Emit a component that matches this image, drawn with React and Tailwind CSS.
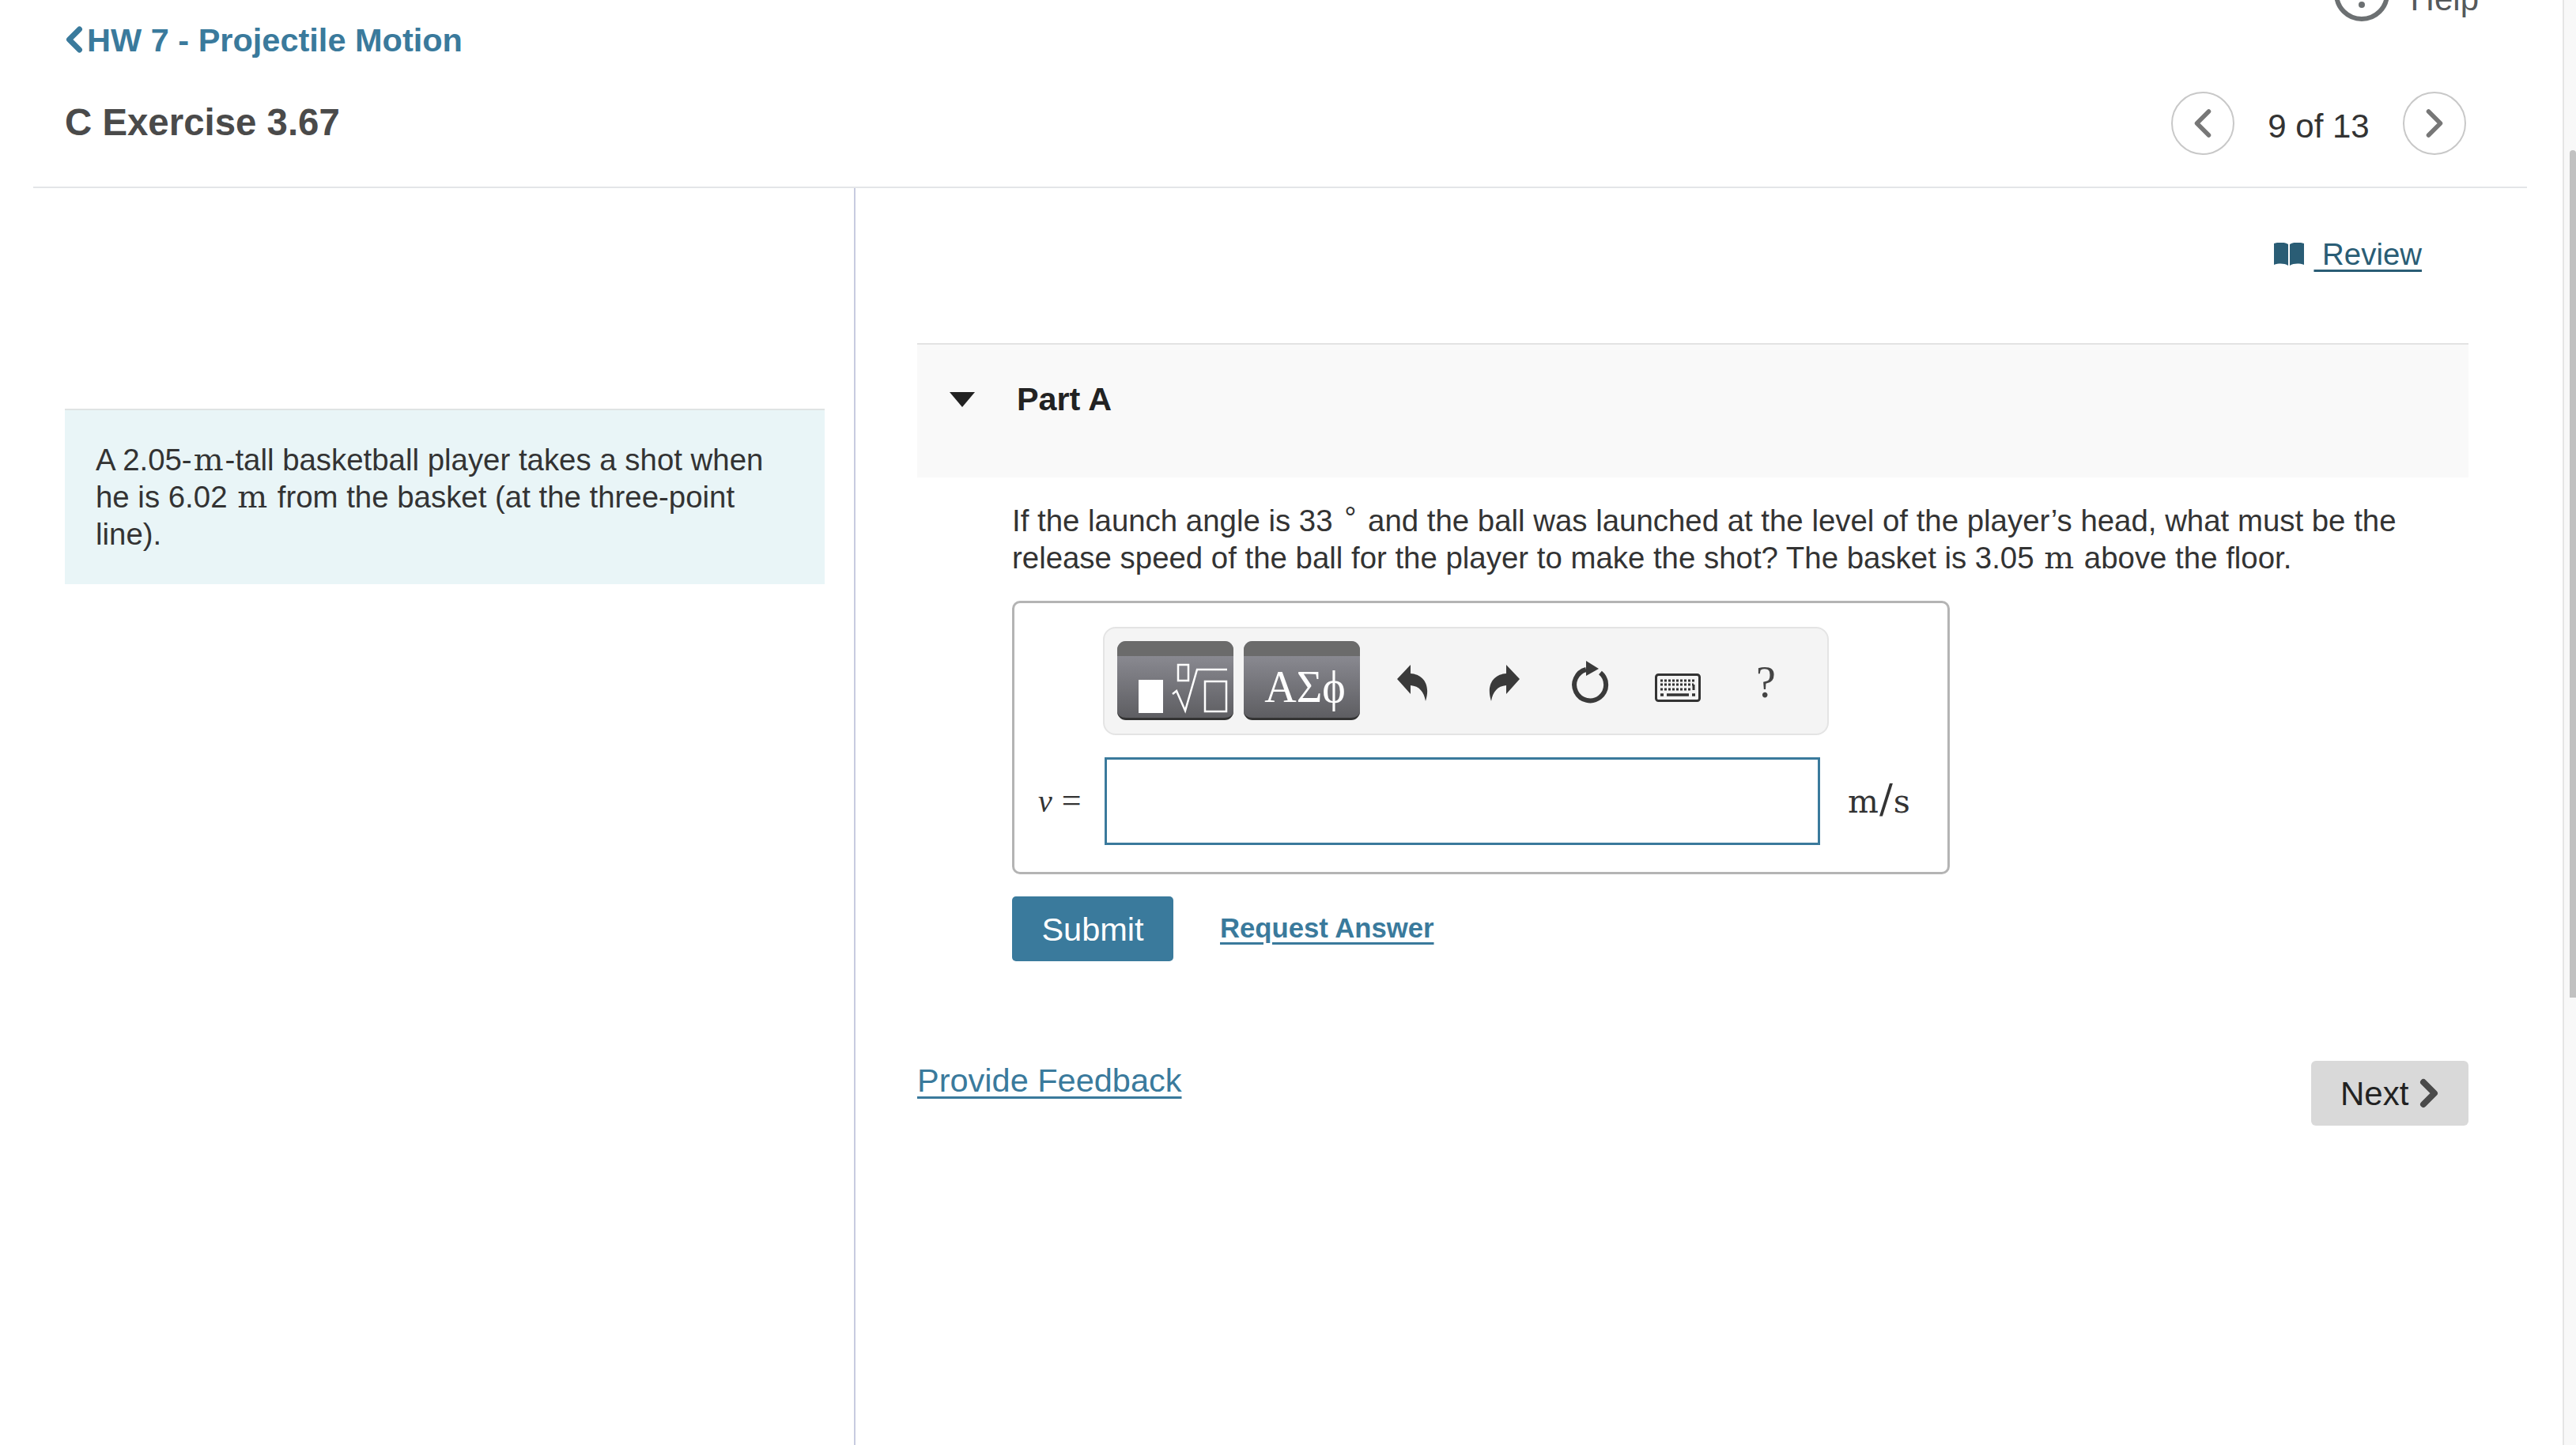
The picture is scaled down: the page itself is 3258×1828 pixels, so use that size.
import React from "react";
import { ChevronLeft, ChevronRight } from "lucide-react";

const UndoIcon = ({ flip }) => (
  <svg width="42" height="46" viewBox="0 0 42 46" className={flip ? "-scale-x-100" : ""}>
    <path d="M0 18 L17 0 L17 11 C32 12 43 24 36 46 C34 34 28 27 17 26 L17 37 Z" fill="#3a3a3a" />
  </svg>
);

const ReloadIcon = () => (
  <svg width="50" height="56" viewBox="0 0 50 56">
    <path d="M38 15 A20 20 0 1 1 20 11" fill="none" stroke="#3a3a3a" strokeWidth="6" />
    <path d="M20 0 L36 10 L20 19 Z" fill="#3a3a3a" />
  </svg>
);

const KeyboardIcon = () => (
  <svg width="58" height="36" viewBox="0 0 58 36">
    <rect x="1.5" y="1.5" width="55" height="33" rx="3" fill="#f4f4f4" stroke="#333" strokeWidth="3" />
    <path d="M7 9 H51 M7 14 H49 M7 20 H46" stroke="#333" strokeWidth="3" strokeDasharray="3 2" fill="none" />
    <path d="M49 14 V21" stroke="#333" strokeWidth="3" fill="none" />
    <path d="M7 27 H11 M15 27 H43 M47 27 H51" stroke="#333" strokeWidth="3.5" fill="none" />
  </svg>
);

const BookIcon = () => (
  <svg width="38" height="29" viewBox="0 0 38 29">
    <path d="M0 1 C6 -1 13 -1 18 2 V29 C13 26 6 26 0 28 Z" fill="#2a5d75" />
    <path d="M38 1 C32 -1 25 -1 20 2 V29 C25 26 32 26 38 28 Z" fill="#2a5d75" />
  </svg>
);

const TemplateGlyph = () => (
  <svg width="147" height="100" viewBox="0 0 147 100" className="absolute inset-0">
    <rect x="27" y="49" width="31" height="42" fill="#fff" />
    <rect x="77" y="30" width="13" height="20" fill="none" stroke="#fff" strokeWidth="2.5" />
    <path d="M70 67 L75 63 L86 88 L101 36 L139 36" fill="none" stroke="#fff" strokeWidth="2.5" />
    <rect x="111" y="51" width="27" height="38" fill="none" stroke="#fff" strokeWidth="2.5" />
  </svg>
);

const ToolButton = ({ children }) => (
  <div className="relative w-[147px] h-[100px] rounded-[11px] overflow-hidden bg-gradient-to-b from-[#94949c] to-[#5e5e62] border-b-[3px] border-[#333]">
    <div className="h-[19px] bg-[#6b6b6b]"></div>
    {children}
  </div>
);

const RoundNav = ({ children }) => (
  <div className="w-[80px] h-[80px] rounded-full border-2 border-[#c8c8c8] flex items-center justify-center text-[#777]">
    {children}
  </div>
);

const M = ({ children }) => <span className="mx-[2px] font-['DejaVu_Serif',serif] text-[40px] leading-none">{children}</span>;

export default function App() {
  return (
    <div className="w-[3258px] h-[1828px] flex overflow-hidden bg-white font-['Liberation_Sans',Arial,sans-serif] text-[38.4px] leading-[47px] text-[#333]">
      <main className="flex-1 min-w-0 pl-[42px]">
        <header className="w-[3154px] h-[238px] border-b-2 border-[#e3e5e8] pl-[40px] flex justify-between">
          <div>
            <a className="flex items-center h-[50px] mt-[25px] font-bold text-[#3a7a9c] text-[41.5px]">
              <ChevronLeft size={52} strokeWidth={3.2} className="-ml-[14px] -mr-[10px]" />
              HW 7 - Projectile Motion
            </a>
            <h1 className="mt-[52px] font-bold text-[47.4px] leading-[56px] text-[#4a4a4a]">C Exercise 3.67</h1>
          </div>
          <div className="pr-[77px] flex flex-col items-end">
            <div className="h-[27px] flex items-end gap-[27px] -mr-[16px]">
              <div className="w-[70px] h-[70px] shrink-0 rounded-full border-[6px] border-[#6c7072] flex items-end justify-center">
                <div className="w-[8px] h-[8px] rounded-full bg-[#6c7072] mb-[11px]"></div>
              </div>
              <span className="text-[42px] text-[#55595b] leading-[22px] mb-[17px]">Help</span>
            </div>
            <div className="mt-[89px] flex items-center">
              <RoundNav><ChevronLeft size={60} strokeWidth={2.2} /></RoundNav>
              <span className="w-[133px] ml-[40px] mr-[40px] mt-[6px] whitespace-nowrap text-[#333] text-[42px] text-center">9 of 13</span>
              <RoundNav><ChevronRight size={60} strokeWidth={2.2} /></RoundNav>
            </div>
          </div>
        </header>

        <div className="flex h-[1590px]">
          <section className="w-[1040px] pl-[40px] border-r-2 border-[#c7cbe0] shrink-0">
            <div className="mt-[279px] w-[961px] h-[222px] bg-[#e9f5f7] border-t-2 border-[#dfe3e3] pl-[39px] pr-[50px] pt-[39px]">
              A 2.05-<M>m</M>-tall basketball player takes a shot when he is 6.02 <M>m</M> from the basket (at the three-point line).
            </div>
          </section>

          <section className="w-[1962px] ml-[78px]">
            <div className="h-[196px] flex justify-end pt-[58px] pr-[59px]">
              <a className="flex h-[50px] items-center text-[#2a5d75]">
                <BookIcon />
                <span className="ml-[12px] underline underline-offset-[6px] decoration-[3px] whitespace-pre"> Review</span>
              </a>
            </div>

            <div className="h-[170px] bg-[#f9f9f9] border-t-2 border-[#e3e3e3] flex items-start pt-[46px] pl-[41px]">
              <svg width="32" height="19" viewBox="0 0 32 19" className="mt-[14px]">
                <path d="M0 0 H32 L16 19 Z" fill="#222" />
              </svg>
              <span className="ml-[53px] font-bold text-[41.3px] text-[#222]">Part A</span>
            </div>

            <div className="pl-[120px]">
              <p className="mt-[31px] w-[1780px]">
                If the launch angle is 33 <span className="relative -top-[4px] mx-[4px] text-[38px] leading-none">°</span> and the ball was launched at the level of the player’s head, what must be the release speed of the ball for the player to make the shot? The basket is 3.05 <M>m</M> above the floor.
              </p>

              <div className="mt-[31px] w-[1186px] h-[346px] border-[3px] border-[#b4b4b4] rounded-[10px] pt-[30px]">
                <div className="ml-[112px] w-[918px] h-[137px] bg-[#f4f4f4] border-2 border-[#e4e4e4] rounded-[16px] flex items-center pl-[16px]">
                  <div className="-mt-[2px]"><ToolButton><TemplateGlyph /></ToolButton></div>
                  <div className="ml-[13px] -mt-[2px]">
                    <ToolButton>
                      <div className="absolute inset-x-0 top-[24px] pl-[8px] text-center text-white font-['Liberation_Serif',serif] text-[56px] leading-[68px] whitespace-nowrap">ΑΣϕ</div>
                    </ToolButton>
                  </div>
                  <div className="ml-[47px] mt-[4px]"><UndoIcon /></div>
                  <div className="ml-[71px] mt-[4px]"><UndoIcon flip /></div>
                  <div className="ml-[64px] mt-[4px]"><ReloadIcon /></div>
                  <div className="ml-[57px] mt-[16px]"><KeyboardIcon /></div>
                  <span className="ml-[70px] mt-[4px] font-['Liberation_Serif',serif] text-[56px] text-[#444]">?</span>
                </div>
                <div className="flex items-center mt-[28px]">
                  <span className="ml-[30px] w-[84px] font-['Liberation_Serif',serif] whitespace-nowrap"><i className="text-[40px]">v</i><span className="ml-[12px] text-[44px]">=</span></span>
                  <div className="w-[905px] h-[111px] border-[3px] border-[#3a7a9c] bg-white"></div>
                  <span className="ml-[35px] -mt-[2px] font-['DejaVu_Serif',serif] text-[41px] tracking-[1px] whitespace-nowrap">m<span className="text-[50px] font-light">/</span>s</span>
                </div>
              </div>

              <div className="mt-[28px] flex items-center">
                <button className="w-[204px] h-[82px] bg-[#3a7a9c] text-white text-[41.5px] rounded-[5px]">Submit</button>
                <a className="ml-[59px] -mt-[2px] font-bold text-[34.7px] text-[#3a7a9c] underline underline-offset-[6px] decoration-[3px]">Request Answer</a>
              </div>
            </div>

            <div className="mt-[126px] flex justify-between items-start">
              <a className="text-[41.5px] leading-[50px] text-[#3a7a9c] underline underline-offset-[6px] decoration-[3px]">Provide Feedback</a>
              <button className="w-[199px] h-[82px] bg-[#d9d9d9] rounded-[6px] flex items-center justify-start pl-[37px] text-[42px] text-[#222]">
                Next
                <ChevronRight size={56} strokeWidth={3.4} className="-ml-[2px] text-[#4a4a4a]" />
              </button>
            </div>
          </section>
        </div>
      </main>

      <aside className="w-[17px] shrink-0 bg-[#f8f8f8] border-l-2 border-[#e5e5e5] pt-[190px] pl-[7px]">
        <div className="h-[1072px] bg-[#c1c1c1] rounded-t-[8px]"></div>
      </aside>
    </div>
  );
}
